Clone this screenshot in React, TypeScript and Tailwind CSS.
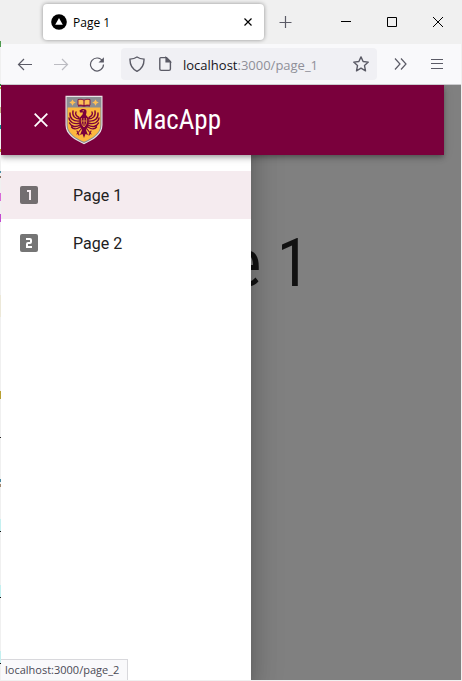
import type { ReactNode } from "react";

type StrokeIconProps = { className?: string; children: ReactNode };

function StrokeIcon({ className = "size-4", children }: StrokeIconProps) {
  return (
    <svg viewBox="0 0 16 16" className={className} fill="none" stroke="currentColor" strokeWidth="1.2" aria-hidden="true">
      {children}
    </svg>
  );
}

function TabStrip() {
  return (
    <div className="flex h-11 bg-[#f0f0f0] pl-[42px] text-black">
      <div className="mt-1 flex h-9 w-[221px] items-center rounded bg-white pr-2 pl-2 shadow-[0_0_4px_rgba(0,0,0,0.4)]">
        <svg viewBox="0 0 16 16" className="size-4" aria-hidden="true">
          <circle cx="8" cy="8" r="7.8" fill="#000" />
          <path d="M8 4 L11.8 10.8 H4.2 Z" fill="#fff" />
        </svg>
        <span className="ml-[6px] flex-1 pt-[2px] text-[12px] leading-4">Page 1</span>
        <button type="button" aria-label="Close tab" className="flex size-4 items-center justify-center">
          <StrokeIcon><path d="M4.5 4.5 L11.5 11.5 M11.5 4.5 L4.5 11.5" /></StrokeIcon>
        </button>
      </div>
      <button type="button" aria-label="New tab" className="ml-[14px] text-[#5b5b66]">
        <StrokeIcon><path d="M7.5 2 V14 M1.5 8.5 H13.5" /></StrokeIcon>
      </button>
      <div className="ml-auto flex">
        <button type="button" aria-label="Minimize" className="flex w-[46px] items-center justify-center">
          <StrokeIcon><path d="M3 7.5 H13" strokeWidth="1" /></StrokeIcon>
        </button>
        <button type="button" aria-label="Maximize" className="flex w-[46px] items-center justify-center">
          <StrokeIcon><path d="M3.5 3.5 H12.5 V12.5 H3.5 Z" strokeWidth="1" /></StrokeIcon>
        </button>
        <button type="button" aria-label="Close window" className="flex w-[46px] items-center justify-center">
          <StrokeIcon><path d="M3 3 L13 13 M13 3 L3 13" strokeWidth="1" /></StrokeIcon>
        </button>
      </div>
    </div>
  );
}

function AddressBar() {
  return (
    <div className="flex h-[41px] items-center border-b border-[#cccccf] bg-[#f9f9fb] pr-4 pl-4 text-[#5b5b66]">
      <button type="button" aria-label="Back">
        <StrokeIcon><path d="M15 8.5 H1.5 M7 3 L1.5 8.5 L7 14" /></StrokeIcon>
      </button>
      <button type="button" aria-label="Forward" className="ml-5 text-[#bcbcc2]">
        <StrokeIcon><path d="M1 8.5 H14.5 M9 3 L14.5 8.5 L9 14" /></StrokeIcon>
      </button>
      <button type="button" aria-label="Reload" className="ml-5">
        <StrokeIcon>
          <path d="M13.6 5.2 A6.5 6.5 0 1 0 14.5 8.6" />
          <path d="M14.9 1.2 V6.6 H9.5 Z" fill="currentColor" stroke="none" />
        </StrokeIcon>
      </button>
      <div className="ml-4 flex h-8 min-w-0 flex-1 items-center rounded bg-[#f0f0f4] px-2">
        <StrokeIcon className="size-4 shrink-0">
          <path d="M8 1 C10 2.4 12.5 3 15 3.1 C15.2 8.6 12.8 13 8 15.3 C3.2 13 .8 8.6 1 3.1 C3.5 3 6 2.4 8 1 Z" strokeWidth="1.4" />
        </StrokeIcon>
        <StrokeIcon className="ml-3 size-4 shrink-0">
          <path d="M3.8 1.6 H9.5 L13.4 5.5 V13 Q13.4 14.4 12 14.4 H4.2 Q2.8 14.4 2.8 13 V2.6 Q2.8 1.6 3.8 1.6 Z" strokeWidth="1.4" />
          <path d="M9 1.5 V6 H13.5 Z" fill="currentColor" />
        </StrokeIcon>
        <span className="ml-[10px] flex-1 pt-[2px] text-[13px] leading-5 text-[#8f8f98]">
          <span className="text-[#15141a]">localhost</span>:3000/page_1
        </span>
        <button type="button" aria-label="Bookmark this page">
          <StrokeIcon>
            <path strokeLinejoin="round" strokeWidth="1.4" d="M8 .9 L10.1 5.5 L15.3 6.1 L11.5 9.6 L12.5 14.8 L8 12.2 L3.5 14.8 L4.5 9.6 L.7 6.1 L5.9 5.5 Z" />
          </StrokeIcon>
        </button>
      </div>
      <button type="button" aria-label="More tools" className="ml-4">
        <StrokeIcon><path d="M2 2.5 L7 8 L2 13.5 M8 2.5 L13 8 L8 13.5" /></StrokeIcon>
      </button>
      <button type="button" aria-label="Open application menu" className="ml-5">
        <StrokeIcon><path d="M2 3.5 H14 M2 7.5 H14 M2 12.5 H14" /></StrokeIcon>
      </button>
    </div>
  );
}

function Crest() {
  return (
    <svg viewBox="0 0 38 50" className="h-[50px] w-[38px]" role="img" aria-label="University crest">
      <path d="M.5 .8 H37.5 V30 C37.5 40 28 45 19 49.2 C10 45 .5 40 .5 30 Z" fill="#e9e3e6" />
      <path d="M1.6 2 H36.4 V30 C36.4 39 27.5 44 19 47.9 C10.5 44 1.6 39 1.6 30 Z" fill="#8b8e92" />
      <path d="M2.6 12.5 H35.4 V30 C35.4 38.5 27 43.2 19 46.8 C11 43.2 2.6 38.5 2.6 30 Z" fill="#fdb73e" />
      <g fill="#fdbf57">
        <path d="M7.5 4.5 L8.7 6.6 L10.8 7.5 L8.7 8.6 L7.5 10.8 L6.3 8.6 L4.2 7.5 L6.3 6.6 Z" />
        <path d="M30.5 4.5 L31.7 6.6 L33.8 7.5 L31.7 8.6 L30.5 10.8 L29.3 8.6 L27.2 7.5 L29.3 6.6 Z" />
        <path d="M13 4.5 Q16 3.8 19 5 Q22 3.8 25 4.5 V10.2 Q22 9.6 19 10.6 Q16 9.6 13 10.2 Z" stroke="#7a003c" strokeWidth=".8" />
      </g>
      <path d="M19 5 V11 M13 11 Q16 10.4 19 11.2 Q22 10.4 25 11" stroke="#7a003c" strokeWidth="1" fill="none" />
      <g fill="none" stroke="#7a003c" strokeWidth="1.4" strokeLinecap="round">
        <path d="M15 24 C10 24 7 21 8 16 M15 26 C8 27 4.5 23 5 18 M15 28 C9 30 4.5 27 4 23 M15 30 C10 33 6 31 4.5 28 M15 32 C11 35 8 34 6.5 32 M14 22.5 C11 21 10 19 11 17" />
        <path d="M23 24 C28 24 31 21 30 16 M23 26 C30 27 33.5 23 33 18 M23 28 C29 30 33.5 27 34 23 M23 30 C28 33 32 31 33.5 28 M23 32 C27 35 30 34 31.5 32 M24 22.5 C27 21 28 19 27 17" />
        <path d="M16 34 L12 39 M12 36 L14 40 M22 34 L26 39 M26 36 L24 40" strokeWidth="1.1" />
      </g>
      <path d="M14.5 15.5 L17 14 Q22 13.5 21.5 17 L21 20 L23.5 23 L23.5 31 L21 35 L23 40 L20.5 39 L19 43 L17.5 39 L15 40 L17 35 L14.5 31 L14.5 23 L17.5 19.5 L18 17.5 L15 17.5 Z" fill="#7a003c" />
      <path d="M19 23 V32 M16.5 26 H21.5 M16.5 23 Q15.5 29 19 32 Q22.5 29 21.5 23" fill="none" stroke="#fdb73e" strokeWidth=".7" />
      <path d="M17.5 15.8 H19" stroke="#fdb73e" strokeWidth=".8" />
    </svg>
  );
}

function AppHeader() {
  return (
    <header className="relative z-20 mr-[17px] flex h-[70px] items-center bg-[#7a003c] pl-8 text-white shadow-[0_2px_4px_-1px_rgba(0,0,0,0.2),0_4px_5px_rgba(0,0,0,0.14),0_1px_10px_rgba(0,0,0,0.12)]">
      <button type="button" aria-label="Close menu" className="flex size-4 items-center justify-center">
        <StrokeIcon><path d="M1.7 1.7 L14.3 14.3 M14.3 1.7 L1.7 14.3" strokeWidth="1.8" /></StrokeIcon>
      </button>
      <div className="ml-4">
        <Crest />
      </div>
      <span className="ml-[30px] font-['Roboto_Condensed','Liberation_Sans_Narrow','Roboto',sans-serif] text-[27px] leading-9">MacApp</span>
    </header>
  );
}

const pages = [
  { label: "Page 1", href: "#page_1", selected: true, digit: "M10 7 H14 V17 H12 V9 H10 Z" },
  {
    label: "Page 2",
    href: "#page_2",
    selected: false,
    digit: "M9 7 H13 A2 2 0 0 1 15 9 V11 A2 2 0 0 1 13 13 H11 V15 H15 V17 H9 V13 A2 2 0 0 1 11 11 H13 V9 H9 Z",
  },
];

function Drawer() {
  return (
    <nav className="absolute inset-y-0 left-0 z-10 w-[250px] bg-white pt-[86px] shadow-[0_8px_10px_-5px_rgba(0,0,0,0.2),0_16px_24px_2px_rgba(0,0,0,0.14),0_6px_30px_5px_rgba(0,0,0,0.12)]">
      <ul>
        {pages.map((page) => (
          <li key={page.label}>
            <a
              href={page.href}
              className={`flex h-12 items-center px-4 text-[16px] leading-6 text-[#212121] ${page.selected ? "bg-[#f5ebef]" : ""}`}
            >
              <svg viewBox="0 0 24 24" className="size-6" aria-hidden="true">
                <rect x="3" y="3" width="18" height="18" rx="2" fill={page.selected ? "#736e70" : "#757575"} />
                <path d={page.digit} fill={page.selected ? "#f5ebef" : "#fff"} />
              </svg>
              <span className="ml-8 pt-[2px]">{page.label}</span>
            </a>
          </li>
        ))}
      </ul>
    </nav>
  );
}

const edgeMarks = [
  { y: 41, h: 6, color: "#4f9a4f" },
  { y: 84, h: 2, color: "#2f8a3a" },
  { y: 87, h: 2, color: "#b5a832" },
  { y: 107, h: 6, color: "#c9b58c" },
  { y: 125, h: 4, color: "#0f8a92" },
  { y: 149, h: 3, color: "#b8962a" },
  { y: 171, h: 2, color: "#4a8ea8" },
  { y: 176, h: 2, color: "#8a7060" },
  { y: 193, h: 8, color: "#d86ad8" },
  { y: 214, h: 8, color: "#c24ad0" },
  { y: 295, h: 22, color: "#ece8d8" },
  { y: 391, h: 8, color: "#b8a032" },
  { y: 437, h: 1, color: "#222222" },
  { y: 479, h: 3, color: "#4a88a0" },
  { y: 484, h: 3, color: "#a08870" },
  { y: 519, h: 13, color: "#c4f0f0" },
  { y: 531, h: 1, color: "#111111" },
  { y: 585, h: 13, color: "#c4f0f0" },
  { y: 597, h: 1, color: "#111111" },
  { y: 651, h: 13, color: "#c4f0f0" },
  { y: 663, h: 1, color: "#111111" },
];

function WindowEdge() {
  return (
    <svg className="absolute top-0 left-0 h-full w-px" aria-hidden="true">
      {edgeMarks.map((mark) => (
        <rect key={mark.y} y={mark.y} width="1" height={mark.h} fill={mark.color} />
      ))}
    </svg>
  );
}

export default function App() {
  return (
    <div className="relative flex min-h-screen flex-col border-r border-b border-[#f0f0f0] bg-[#f0f0f0] pl-px font-['Open_Sans','Noto_Sans',sans-serif]">
      <WindowEdge />
      <TabStrip />
      <AddressBar />
      <div className="relative flex flex-1 flex-col overflow-hidden bg-[#808080] font-['Roboto',sans-serif]">
        <AppHeader />
        <main className="mr-6 pt-16 text-center">
          <h1 className="font-['Roboto_Condensed','Liberation_Sans_Narrow','Roboto',sans-serif] text-[67px] leading-[88px] text-[#111]">Page 1</h1>
        </main>
        <Drawer />
        <div className="absolute bottom-0 left-0 z-30 border-t border-r border-[#d8d8dc] bg-[#f9f9fb] pr-2 pl-1 font-['Open_Sans','Noto_Sans',sans-serif] text-[11px] leading-5 text-[#4a4a55]">
          localhost:3000/page_2
        </div>
      </div>
    </div>
  );
}
